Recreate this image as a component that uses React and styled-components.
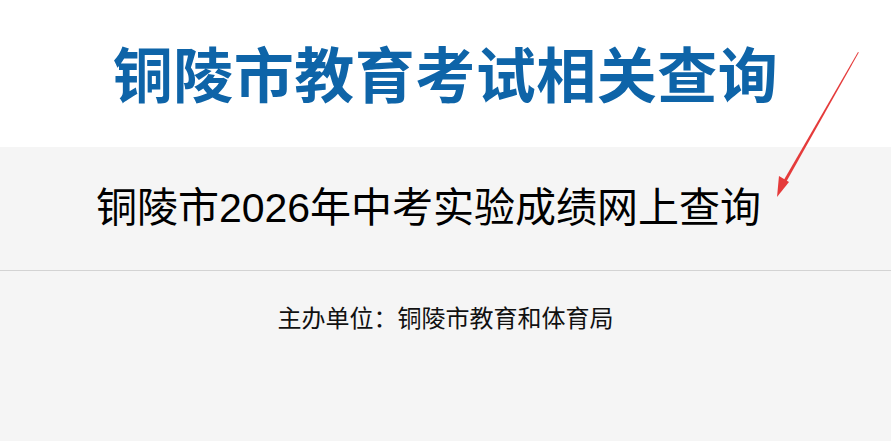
import React from "react";
import styled, { createGlobalStyle } from "styled-components";

const GlobalStyle = createGlobalStyle`
  html, body {
    margin: 0;
    padding: 0;
    background: #f5f5f5;
    font-family: "Liberation Sans", "Noto Sans CJK SC", sans-serif;
  }
`;

const Page = styled.div`
  position: relative;
  width: 891px;
  height: 441px;
  overflow: hidden;
  background: #f5f5f5;
`;

const Header = styled.header`
  height: 147px;
  background: #fff;
  display: flex;
  align-items: center;
  justify-content: center;
`;

const SiteTitle = styled.h1`
  margin: -4px 0 0;
  font-family: "Noto Sans CJK SC", sans-serif;
  font-size: 60px;
  font-weight: 700;
  letter-spacing: 0.5px;
  color: #0e64a8;
  line-height: 1;
`;

const QueryBanner = styled.div`
  height: 123px;
  display: flex;
  align-items: center;
  justify-content: center;
  border-bottom: 1px solid #d3d3d3;
`;

const QueryTitle = styled.h2`
  margin: 0 34px 0 0;
  font-size: 41px;
  font-weight: 400;
  color: #000;
  line-height: 1;
`;

const Sponsor = styled.p`
  margin: 0;
  padding-top: 36px;
  text-align: center;
  font-size: 24px;
  color: #111;
  line-height: 1;
`;

const Pointer = styled.svg`
  position: absolute;
  left: 770px;
  top: 48px;
  pointer-events: none;
`;

export default function App() {
  return (
    <Page>
      <GlobalStyle />
      <Header>
        <SiteTitle>铜陵市教育考试相关查询</SiteTitle>
      </Header>
      <QueryBanner>
        <QueryTitle>铜陵市2026年中考实验成绩网上查询</QueryTitle>
      </QueryBanner>
      <Sponsor>主办单位：铜陵市教育和体育局</Sponsor>
      <Pointer width="100" height="155" viewBox="0 0 100 155">
        {/* tapered red stroke with arrow head */}
        <polygon points="88,4 88.8,4.6 15,136 12.4,134.6" fill="#e53b3b" />
        <polygon points="7,149 9,128 19,134" fill="#e53b3b" />
      </Pointer>
    </Page>
  );
}
